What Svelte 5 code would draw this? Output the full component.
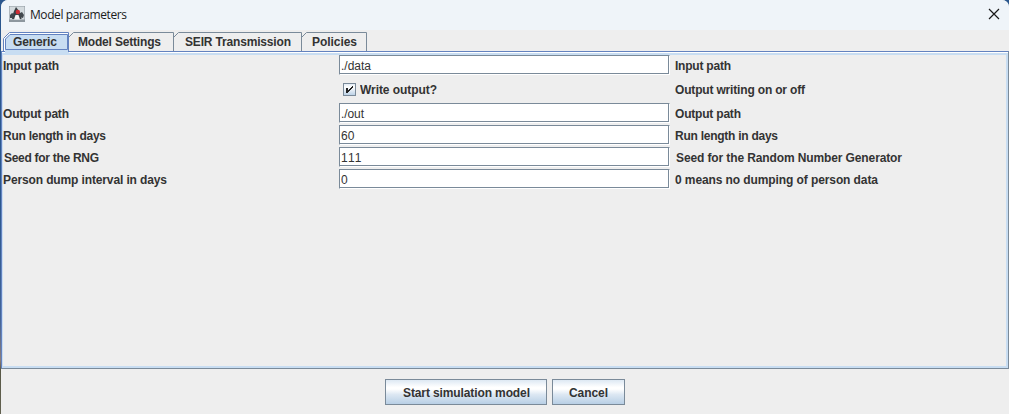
<script>
  const tabs = [
    { name: 'Generic', w: 65, tx: 10, tw: 44 },
    { name: 'Model Settings', w: 105, tx: 10, tw: 83 },
    { name: 'SEIR Transmission', w: 128, tx: 12, tw: 106 },
    { name: 'Policies', w: 65, tx: 11, tw: 45 }
  ];
  const rows = [
    { label: 'Input path', lw: 56, value: './data', vw: 30, hint: 'Input path', hw: 56, h: 24 },
    { check: 'Write output?', label: '', hint: 'Output writing on or off', hw: 130, h: 24 },
    { label: 'Output path', lw: 66, value: './out', vw: 23, hint: 'Output path', hw: 66, h: 22 },
    { label: 'Run length in days', lw: 103, value: '60', vw: 13.5, hint: 'Run length in days', hw: 103, h: 22 },
    { label: 'Seed for the RNG', lw: 95, value: '111', vw: 20.5, hint: 'Seed for the Random Number Generator', hw: 226, h: 22, dx: 1 },
    { label: 'Person dump interval in days', lw: 164, value: '0', vw: 7, hint: '0 means no dumping of person data', hw: 203, h: 22 }
  ];
</script>

{#snippet txt(s, w, regular = false)}
  <svg class="txt" class:regular width={w + 2} height="16"><text x="0" y="12" textLength={w}>{s}</text></svg>
{/snippet}

<div class="desktop">
  <div class="window">
    <header>
      <svg class="logo" width="16" height="16" viewBox="0 0 16 16">
        <rect width="16" height="16" fill="#8d979f" />
        <path d="M.5.5h15v13H.5z" fill="#d3dade" />
        <path d="M7 1L5 5 4 8 3 13h9.500L12 9 10 5z" fill="#3b4146" />
        <path d="M1 9l2-2 2 1-1 4H1zM11 7l2-1 2 3-1 3-3-1z" fill="#42484e" />
        <path d="M6.500 9h3l1.500 4.500H5z" fill="#f5f6f6" />
        <circle cx="8.800" cy="6" r="2.200" fill="#cf2d35" />
        <path d="M.5 14h15v1.500H.5z" fill="#8d979f" />
      </svg>
      <svg class="title" width="110" height="20"><text x="0" y="13" textLength="97">Model parameters</text></svg>
      <svg class="close" width="12" height="12" viewBox="0 0 12 12"><path d="M1 1l10 10M11 1L1 11" stroke="#191919" stroke-width="1.2" /></svg>
    </header>
    <nav>
      {#each tabs as t, i}
        <div class="tab" class:active={i === 0} style:width="{t.w}px">
          <svg class="edge" width={t.w + 1} height={i === 0 ? 23 : 19}>
            {#if i === 0}
              <path d="M.5 19V6.500L6.500.5H{t.w + .5}V19z" fill="#fff" />
              <path d="M2 23V7L7 2H{t.w + 1}V23z" fill="#c8ddf2" />
              <path d="M.5 19V6.500L6.500.5H{t.w + .5}V20M2.500 17.500V7L7 2.500H{t.w - .5}V17.500z" fill="none" stroke="#6382bf" />
            {:else}
              <path d="M.5 5.500L5.500.5H{t.w + .5}V19" fill="none" stroke="#7a8a99" />
            {/if}
          </svg>
          <span style:margin-left="{t.tx}px">{@render txt(t.name, t.tw)}</span>
        </div>
      {/each}
    </nav>
    <main>
      {#each rows as r}
        <div class="row" style:height="{r.h}px">
          <div class="label" style:padding-left="{r.dx ?? 0}px">{@render txt(r.label, r.lw ?? 0)}</div>
          <div class="control">
            {#if r.check}
              <div class="check">
                <svg width="13" height="13"><defs><linearGradient id="cb" x2="0" y2="1"><stop stop-color="#dde8f3" /><stop offset=".3" stop-color="#fff" /><stop offset="1" stop-color="#b8cfe5" /></linearGradient></defs><rect x=".5" y=".5" width="12" height="12" fill="url(#cb)" stroke="#7a8a99" /><path d="M3 5h2v2h1V6h1V5h1V4h1V3h1v2H9v1H8v1H7v1H6v1H5v1H3z" fill="#222" /></svg>
                <div class="caption">{@render txt(r.check, 77)}</div>
              </div>
            {:else}
              <div class="field">{@render txt(r.value, r.vw, true)}</div>
            {/if}
          </div>
          <div class="hint" style:padding-left="{r.dx ?? 0}px">{@render txt(r.hint, r.hw)}</div>
        </div>
      {/each}
    </main>
    <footer>
      <button class="start">{@render txt('Start simulation model', 127)}</button>
      <button class="cancel">{@render txt('Cancel', 39)}</button>
    </footer>
  </div>
</div>

<style>
  :global(body) { overflow: hidden; }
  * { box-sizing: border-box; }
  svg { display: block; flex: none; }
  .desktop { width: 1009px; height: 414px; padding-left: 1px; background: linear-gradient(#2b578e 0, #2b578e 200px, #43659a 320px, #8c7d7b 360px, #585846 370px, #626150); }
  .window { width: 1008px; height: 414px; background: #eee; border-radius: 7px 7px 0 0; overflow: hidden; display: flex; flex-direction: column; }
  header { height: 30px; flex: none; background: #eff4f9; display: flex; align-items: flex-start; padding: 6px 9px 0 8px; }
  .title { margin: 0 auto 0 5px; font: 12px "Open Sans", "Noto Sans", sans-serif; fill: #1b1b1b; }
  .close { margin-top: 2px; }
  nav { height: 21px; flex: none; display: flex; padding: 2px 0 0 2px; }
  .tab { position: relative; height: 19px; padding-top: 2px; }
  .active { z-index: 1; }
  .edge { position: absolute; left: 0; top: 0; }
  .tab span { display: block; position: relative; }
  .txt { font: bold 12px "Liberation Sans", Arial, sans-serif; fill: #333; }
  .regular { font-weight: normal; }
  main { height: 318px; flex: none; border: 1px solid #7a8a99; border-top-color: #6382bf; border-left-color: #6382bf; box-shadow: inset 0 1px #fff, inset 0 3px #c8ddf2, inset 1px 0 #c8ddf2, inset -2px -2px #c8ddf2; padding: 3px 0 0 1px; }
  .row { display: flex; align-items: flex-start; }
  .label { width: 336px; padding-top: 3px; }
  .control { width: 336px; }
  .hint { padding-top: 3px; }
  .field { width: 331px; height: 20px; background: #fff; border: 1px solid #7a8a99; border-right-color: #fff; border-bottom-color: #fff; box-shadow: inset -1px -1px #7a8a99; padding: 2px 0 0 1px; }
  .check { display: flex; padding: 4px 0 0 4px; }
  .caption { margin: -1px 0 0 4px; }
  footer { display: flex; justify-content: center; gap: 5px; padding-top: 10px; }
  button { height: 26px; border: 1px solid #7a8a99; padding: 2px 0 0 17px; display: flex; align-items: center; background: linear-gradient(#dde8f3, #fff 30%, #fff 38%, #dde8f3 60%, #b8cfe5); }
  .start { width: 162px; }
  .cancel { width: 73px; padding-left: 16px; }
</style>
